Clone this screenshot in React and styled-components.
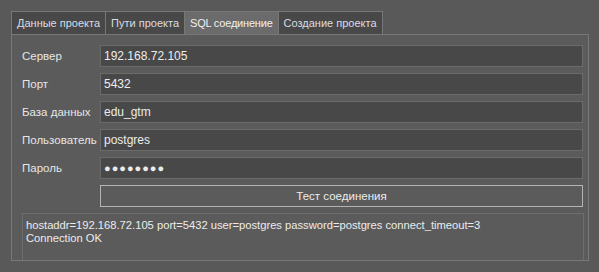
import React from "react";
import styled, { createGlobalStyle } from "styled-components";

const Global = createGlobalStyle`
  html, body { margin: 0; padding: 0; background: #595959; }
  body { font-family: "Liberation Sans", Arial, sans-serif; font-size: 11px; color: #e6e6e6; }
`;

const Window = styled.div`
  box-sizing: border-box;
  width: 599px;
  height: 272px;
  padding: 11px 10px 0 11px;
  background: #595959;
`;

const TabBar = styled.div`
  display: flex;
  height: 23px;
`;

const Tab = styled.div`
  box-sizing: border-box;
  height: 23px;
  padding: 0 5px;
  display: flex;
  align-items: center;
  border: 1px solid #777;
  border-bottom: none;
  margin-left: ${p => (p.$first ? "0" : "-1px")};
  background: ${p => (p.$active ? "#6b6b6b" : "#484848")};
  color: ${p => (p.$active ? "#f0f0f0" : "#d8dce4")};
  font-size: 11px;
  letter-spacing: ${p => (p.$active ? "-0.2px" : "0")};
  white-space: nowrap;
`;

const Panel = styled.div`
  box-sizing: border-box;
  width: 578px;
  height: 227px;
  border: 1px solid #777;
  padding: 10px 5px 0 10px;
  overflow: hidden;
  background: #5b5b5b;
`;

const Form = styled.div`
  display: grid;
  grid-template-columns: 78px 483px;
  grid-auto-rows: 22px;
  row-gap: 6px;
`;

const Label = styled.div`
  display: flex;
  align-items: center;
  color: #e6e6e6;
  font-size: 11.5px;
  white-space: nowrap;
`;

const Field = styled.div`
  box-sizing: border-box;
  display: flex;
  align-items: center;
  padding-left: 3px;
  background: #484848;
  border: 1px solid #6b6b6b;
  color: #ececec;
  font-size: 12px;
`;

const Dots = styled.span`
  letter-spacing: 1px;
  font-size: 11px;
`;

const Button = styled.div`
  box-sizing: border-box;
  grid-column: 2;
  display: flex;
  align-items: center;
  justify-content: center;
  border: 1px solid #b4b4b4;
  background: #5b5b5b;
  color: #ececec;
  font-size: 11.5px;
`;

const Output = styled.div`
  box-sizing: border-box;
  margin-top: 6px;
  width: 562px;
  height: 80px;
  border: 1px solid #6e6e6e;
  padding: 5px 3px;
  line-height: 13px;
  color: #ececec;
  font-size: 11.2px;
`;

const rows = [
  ["Сервер", "192.168.72.105"],
  ["Порт", "5432"],
  ["База данных", "edu_gtm"],
  ["Пользователь", "postgres"],
];

export default function App() {
  return (
    <>
      <Global />
      <Window>
        <TabBar>
          <Tab $first>Данные проекта</Tab>
          <Tab>Пути проекта</Tab>
          <Tab $active>SQL соединение</Tab>
          <Tab>Создание проекта</Tab>
        </TabBar>
        <Panel>
          <Form>
            {rows.map(([l, v]) => (
              <React.Fragment key={l}>
                <Label>{l}</Label>
                <Field>{v}</Field>
              </React.Fragment>
            ))}
            <Label>Пароль</Label>
            <Field>
              <Dots>●●●●●●●●</Dots>
            </Field>
            <Button>Тест соединения</Button>
          </Form>
          <Output>
            hostaddr=192.168.72.105 port=5432 user=postgres password=postgres connect_timeout=3
            <br />
            Connection OK
          </Output>
        </Panel>
      </Window>
    </>
  );
}
